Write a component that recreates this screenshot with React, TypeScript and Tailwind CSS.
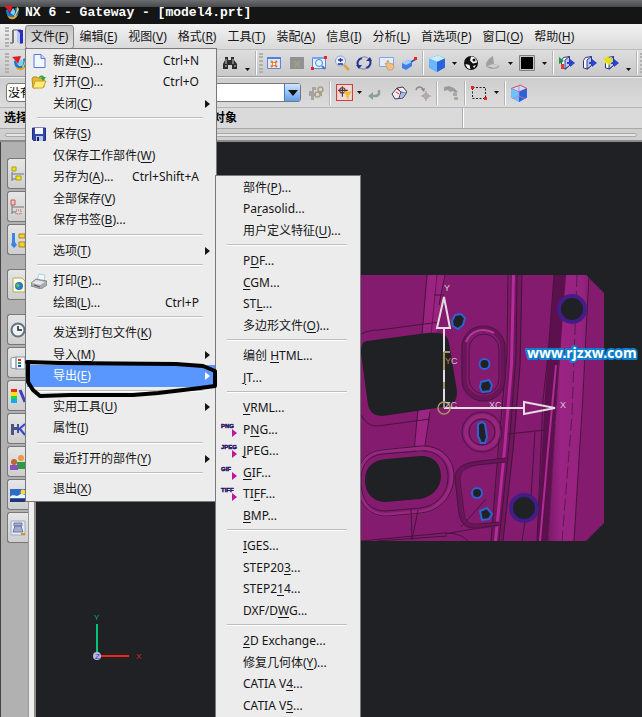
import { ReactNode } from 'react'

type Entry = {
  label: string // '&' marks the access key
  keys?: string
  sub?: boolean
  icon?: ReactNode
  active?: boolean
}

const fontClass = 'font-["Noto_Sans","Noto_Sans_CJK_SC",sans-serif]'

// ─── Icons ──────────────────────────────────────────────────────────────

function Svg({ children, size = 'w-4 h-4' }: { children: ReactNode; size?: string }) {
  return <svg viewBox="0 0 16 16" className={`${size} shrink-0`} fill="none">{children}</svg>
}

const NxLogo = (
  <Svg>
    <path d="M2 6c0 6 4 9 8 8 4-1 6-6 4-11l-3 1c1 4 0 6-2 7-3 0-4-2-5-6z" fill="#1679d6" />
    <path d="M3 11c3 3 8 3 11-1-1 4-4 6-7 5-2 0-3-2-4-4z" fill="#f5a01c" />
    <path d="M9 4c2 2 3 4 1 7-2 0-3-1-4-2z" fill="#6fd3fa" />
    <path d="M0 2l9-1-3 8-2-3z" fill="#e11b22" />
    <path d="M13 3l2 2-4 8-1-1c2-3 3-5 3-9z" fill="#ffd04a" />
  </Svg>
)

const DoorIcon = (
  <Svg>
    <path d="M1 14h3M4 1h8v13" stroke="#555" strokeWidth="1" />
    <path d="M3 1h2v13H3z" fill="#777" />
    <path d="M8 1h6v13l-2 1-4-3z" fill="#2b2bc0" />
    <path d="M8 1l3 3v11l-3-3z" fill="#b8c4ff" />
  </Svg>
)

const NewIcon = (
  <Svg>
    <path d="M3 1.5h7l4 4v9H3z" fill="#f3f7ff" stroke="#5b78d8" />
    <path d="M10 1.5v4h4" fill="#c9d6ff" stroke="#5b78d8" />
  </Svg>
)

const OpenIcon = (
  <Svg>
    <path d="M1 5l1-2h4l1 1h6v9L2 14z" fill="#e3b93a" stroke="#b68d1e" />
    <path d="M4 7h11l-3 7H2z" fill="#ffeb7a" stroke="#c79e25" />
    <path d="M8 4c0-3 4-3 5-1h2l-3 4-2-3h1c0-1-2-1-3 0z" fill="#2fa53a" />
  </Svg>
)

const SaveIcon = (
  <Svg>
    <path d="M1.500 2h13v12.500H2.500l-1-1z" fill="#3346b0" stroke="#202c80" />
    <path d="M4 2h8v6H4z" fill="#f4f6ff" />
    <path d="M5 10h7v5H5z" fill="#b9c5e6" />
    <path d="M6 11h2v4H6z" fill="#1c2458" />
  </Svg>
)

const PrintIcon = (
  <Svg>
    <path d="M6 7l2-6 6 1-1 6z" fill="#e8fbfd" stroke="#9cc3c8" strokeWidth=".7" />
    <path d="M0 10l5-4 11 2v4l-6 4-10-3z" fill="#a9abb0" stroke="#73767c" strokeWidth=".7" />
    <path d="M1 10l4-3 9 2-5 3z" fill="#e5e6e8" />
    <path d="M3 12l6 2" stroke="#54575c" />
  </Svg>
)

const FindIcon = (
  <Svg>
    <path d="M3 2h3v3h3V2h3v3l3 4v5h-5v-4H6v4H1V9l2-4z" fill="#2d2d2d" />
    <path d="M4 4v5M11 4v5M3 11h2M12 11h2" stroke="#c8c8c8" />
  </Svg>
)

const FitIcon = (
  <Svg>
    <path d="M1.500 2.500h13v11h-13z" fill="#dbe8ff" stroke="#5c87dc" />
    <path d="M1 2h14v2H1z" fill="#4f82e4" />
    <path d="M5 6l6 6M11 6l-6 6" stroke="#ed7418" strokeWidth="2" />
    <path d="M7 8h2v2H7z" fill="#fff" />
  </Svg>
)

const FitGreyIcon = (
  <Svg>
    <path d="M1 2h14v12H1z" fill="#8f9194" />
    <path d="M5 6l6 6M11 6l-6 6" stroke="#a39d83" strokeWidth="2" />
  </Svg>
)

const ZoomBoxIcon = (
  <Svg>
    <path d="M1.500 2.500h13v11h-13z" fill="#e6f0ff" stroke="#5c87dc" />
    <path d="M1 2h13v2H1z" fill="#7aa4f0" />
    <circle cx="8" cy="8" r="3.500" fill="#d8f2ff" stroke="#5288b8" />
    <path d="M11 11l3 3" stroke="#4878c4" strokeWidth="2" />
    <path d="M0 12h3v3H0zM13 1h3v3h-3z" fill="#e22" />
  </Svg>
)

const ZoomIcon = (
  <Svg>
    <path d="M10 10l5 5" stroke="#d9a441" strokeWidth="2.500" />
    <circle cx="6.500" cy="6" r="5" fill="#e4efff" stroke="#8ea4cf" />
    <path d="M4 5h5M6.500 3v4M4 9h5" stroke="#26318c" strokeWidth="1.300" />
  </Svg>
)

const RotateIcon = (
  <Svg>
    <path d="M3 12C0 8 2 4 6 3" stroke="#25368c" strokeWidth="2" />
    <path d="M13 4c3 4 1 8-3 9" stroke="#25368c" strokeWidth="2" />
    <path d="M5 3c3-2 6-1 8 1M11 13c-3 2-6 1-8-1" stroke="#6578b8" />
    <path d="M0 10h6l-3 4zM10 6h6l-2-4z" fill="#25368c" />
  </Svg>
)

const PanIcon = (
  <Svg>
    <path d="M.5 2.500h14v9H.5z" fill="#e2ecff" stroke="#84a5e0" />
    <path d="M6 8l2 1V6l1-1 1 3 4 1 1 3-2 3H9z" fill="#f0c083" stroke="#c0915a" strokeWidth=".7" />
  </Svg>
)

const PerspectiveIcon = (
  <Svg>
    <path d="M1 8l6-3 4 2v4l-6 4-4-2z" fill="#3e7ee6" />
    <path d="M1 8l6-3 4 2-6 3z" fill="#a5d1ff" />
    <path d="M10 7l5-3" stroke="#2a51b8" strokeWidth="1.500" />
    <path d="M13 2h3v3h-3z" fill="#e22" />
  </Svg>
)

const CubeIcon = (
  <Svg size="w-[18px] h-[18px]">
    <path d="M1 4l8-3 6 3v8l-7 4-7-4z" fill="#4393f4" />
    <path d="M1 4l8-3 6 3-7 3z" fill="#c5ecff" />
    <path d="M8 7l7-3v8l-7 4z" fill="#2b62dc" />
    <path d="M1 4l7 3v9l-7-4z" fill="#6ab6ff" />
  </Svg>
)

const CubeEdgeIcon = (
  <Svg size="w-[18px] h-[18px]">
    <path d="M1 4l8-3 6 3v8l-7 4-7-4z" fill="#4393f4" />
    <path d="M1 4l8-3 6 3-7 3z" fill="#bfe0ff" stroke="#e0405a" strokeWidth=".8" />
    <path d="M8 7l7-3v8l-7 4z" fill="#2b62dc" />
    <path d="M1 4l7 3v9l-7-4z" fill="#6cc4ff" />
    <path d="M8 2v9l6 2M8 11l-6 2" stroke="#d26ab5" strokeWidth=".7" />
  </Svg>
)

const SphereIcon = (
  <Svg>
    <circle cx="8" cy="8" r="7" fill="#111" />
    <path d="M8 1.500c4 0 6 3 6 6l-4 1-3-3zM2.500 9l4 1 1 4C5 14 3 12 2.500 9z" fill="#f4f4f4" />
    <circle cx="11" cy="5" r="1.500" fill="#111" />
    <path d="M10 11l3-1-2 3z" fill="#f4f4f4" />
  </Svg>
)

const GreyShapeIcon = (
  <Svg>
    <path d="M1 11c0-5 3-8 7-10l1 8 6 2c-3 4-11 4-14 0z" fill="#a0a0a0" />
    <path d="M2 11l6-2 6 2-5 2z" fill="#cfcfcf" />
  </Svg>
)

const BlackSquareIcon = (
  <Svg>
    <path d="M.5.5h15v15H.5z" fill="#c8c8c8" stroke="#808080" />
    <path d="M2 2h12v12H2z" fill="#000" />
  </Svg>
)

function LayerIcon({ mark }: { mark?: 'red' | 'star' }) {
  return (
    <Svg>
      <path d="M2.500 5.500l2-3 6-1v9l-4 3.500-4-1z" fill="#fff" stroke="#2c3584" />
      <path d="M6 5l4.500-3.500v9L6 14z" fill="#b9c9f4" stroke="#2c3584" />
      <path d="M8 7h3V4l5 4-5 4V9H8z" fill="#2a42cc" />
      {mark === 'red' && <path d="M0 2l5 4-5 3z" fill="#18983a" />}
      {mark === 'red' && <path d="M2 9h3v5H2z" fill="#e23a3a" />}
      {mark === 'star' && <path d="M5 0l1 3 3-1-1 3 2 2-3 1-1 3-2-3-3 1 1-3-2-3 3 0z" fill="#e6df1b" />}
    </Svg>
  )
}

const KeyGreyIcon = (
  <Svg>
    <path d="M1 6h3V2h4v3H6v3h2v3H6v4H3v-4H1z" fill="#a3a3a3" />
    <circle cx="12.500" cy="4.500" r="2.500" stroke="#a9a084" strokeWidth="1.500" />
    <circle cx="9.500" cy="9.500" r="2.500" stroke="#a9a084" strokeWidth="1.500" />
    <path d="M13 7v4" stroke="#a9a084" strokeWidth="2" />
  </Svg>
)

const SnapIcon = (
  <Svg size="w-[17px] h-[17px]">
    <path d="M.5.500h15v15H.5z" fill="#eadada" stroke="#d43b3b" />
    <path d="M6 2v10M2 6h9" stroke="#333" />
    <circle cx="6" cy="6" r="2.500" stroke="#7a3030" />
    <path d="M7 7h8l-3 4v4l-2-2v-2z" fill="#f4ba27" />
  </Svg>
)

const BackIcon = (
  <Svg>
    <path d="M13 5v3c0 2-2 3-4 3H6" stroke="#8ea09b" strokeWidth="2.500" />
    <path d="M7 7v8l-5-4z" fill="#8ea09b" />
  </Svg>
)

const FaceIcon = (
  <Svg>
    <path d="M1 9l5-6 6-1 4 5-4 6-8 1z" fill="#eceef4" stroke="#3a3e55" />
    <path d="M6 3l4 4-2 6M10 7l5 1" stroke="#3a3e55" />
    <path d="M6 4l4 3M5 7l3 2" stroke="#e22a2a" />
    <path d="M10 8l5-1-3 5-3 1z" fill="#a6b8ec" />
  </Svg>
)

const UndoSnapIcon = (
  <Svg>
    <path d="M1 5c1-4 6-4 7 0" stroke="#8a8a8a" strokeWidth="1.500" />
    <path d="M6 4l3 3 1-4z" fill="#8a8a8a" />
    <path d="M11 6v10M6 11h10" stroke="#a89494" />
    <circle cx="11" cy="11" r="2.500" stroke="#a89494" />
  </Svg>
)

const HammerIcon = (
  <Svg>
    <path d="M1 2l5-1 5 2 4 4-3 1-2-2-3 1-2-2-4 1z" fill="#9c9c9c" />
    <path d="M10 8h4v3h-4zM11 12h4v3h-4z" fill="#a9a99c" />
  </Svg>
)

const RectSelectIcon = (
  <Svg>
    <path d="M1.500 2.500h13v11h-13z" stroke="#222" strokeDasharray="2 1.500" />
    <path d="M0 1h3v3H0zM13 12h3v3h-3z" fill="#e22" />
  </Svg>
)

function FormatIcon({ name }: { name: string }) {
  return (
    <svg viewBox="0 0 18 18" className="w-[18px] h-[18px] overflow-visible">
      <text x="0" y="7" fontSize="6" fontWeight="bold" fill="#2d1768" stroke="#2d1768" strokeWidth=".5" fontFamily="Liberation Sans">{name}</text>
      <path d="M11 8l5 4-5 4z" fill="#c21497" />
    </svg>
  )
}

// ─── Menu data ──────────────────────────────────────────────────────────

const menuBar = ['编辑(&E)', '视图(&V)', '格式(&R)', '工具(&T)', '装配(&A)', '信息(&I)', '分析(&L)', '首选项(&P)', '窗口(&O)', '帮助(&H)']

const fileMenu: Entry[][] = [
  [
    { label: '新建(&N)...', keys: 'Ctrl+N', icon: NewIcon },
    { label: '打开(&O)...', keys: 'Ctrl+O', icon: OpenIcon },
    { label: '关闭(&C)', sub: true },
  ],
  [
    { label: '保存(&S)', icon: SaveIcon },
    { label: '仅保存工作部件(&W)' },
    { label: '另存为(&A)...', keys: 'Ctrl+Shift+A' },
    { label: '全部保存(&V)' },
    { label: '保存书签(&B)...' },
  ],
  [{ label: '选项(&T)', sub: true }],
  [
    { label: '打印(&P)...', icon: PrintIcon },
    { label: '绘图(&L)...', keys: 'Ctrl+P' },
  ],
  [
    { label: '发送到打包文件(&K)' },
    { label: '导入(&M)', sub: true },
    { label: '导出(&E)', sub: true, active: true },
  ],
  [
    { label: '实用工具(&U)', sub: true },
    { label: '属性(&I)' },
  ],
  [{ label: '最近打开的部件(&Y)', sub: true }],
  [{ label: '退出(&X)' }],
]

const exportMenu: Entry[][] = [
  [{ label: '部件(&P)...' }, { label: 'Pa&rasolid...' }, { label: '用户定义特征(&U)...' }],
  [{ label: 'P&DF...' }, { label: '&CGM...' }, { label: 'ST&L...' }, { label: '多边形文件(&O)...' }],
  [{ label: '编创 &HTML...' }, { label: '&JT...' }],
  [
    { label: '&VRML...' },
    { label: 'P&NG...', icon: <FormatIcon name="PNG" /> },
    { label: '&JPEG...', icon: <FormatIcon name="JPEG" /> },
    { label: '&GIF...', icon: <FormatIcon name="GIF" /> },
    { label: 'TI&FF...', icon: <FormatIcon name="TIFF" /> },
    { label: '&BMP...' },
  ],
  [{ label: '&IGES...' }, { label: 'STEP20&3...' }, { label: 'STEP2&14...' }, { label: 'DXF/D&WG...' }],
  [{ label: '&2D Exchange...' }, { label: '修复几何体(&Y)...' }, { label: 'CATIA V&4...' }, { label: 'CATIA V&5...' }],
]

function KeyLabel({ text }: { text: string }) {
  const at = text.indexOf('&')
  if (at < 0) return <>{text}</>
  return <>{text.slice(0, at)}<u className="underline-offset-2">{text[at + 1]}</u>{text.slice(at + 2)}</>
}

function Menu({ groups, className, label }: { groups: Entry[][]; className: string; label: string }) {
  let row = 0
  return (
    <div role="menu" aria-label={label} className={`absolute border border-[#77797c] bg-[#ececec] p-px ${className}`}>
      {groups.map((group, g) => (
        <div key={g} role="group">
          {g > 0 && <div role="separator" className="h-[9px] pt-[3px] pl-[10px] pr-3"><div className="h-[2px] border-t border-[#bdbdbd] bg-white" /></div>}
          {group.map(entry => (
            <button
              key={entry.label}
              role="menuitem"
              className={`flex w-full items-center text-left whitespace-nowrap ${row++ % 2 ? 'h-[22px]' : 'h-[21px]'} ${
                entry.active ? 'bg-[#5996fd] text-white' : 'text-[#161616]'
              }`}
            >
              <span className="flex w-[26px] shrink-0 items-center pl-1">{entry.icon}</span>
              <span className="flex-1"><KeyLabel text={entry.label} /></span>
              {entry.keys && <span className="pr-4">{entry.keys}</span>}
              {entry.sub && <svg viewBox="0 0 5 8" className="mr-[5px] h-2 w-[5px]"><path d="M0 0l5 4-5 4z" fill="currentColor" /></svg>}
            </button>
          ))}
        </div>
      ))}
    </div>
  )
}

// ─── Toolbars ───────────────────────────────────────────────────────────

function Tool({ children, name }: { children: ReactNode; name: string }) {
  return <button aria-label={name} className="flex h-6 w-[22px] shrink-0 items-center justify-center">{children}</button>
}

function Caret({ low, tight }: { low?: boolean; tight?: boolean }) {
  return (
    <button aria-label="更多" className={`flex h-6 shrink-0 justify-center ${tight ? 'w-2' : 'w-3'} ${low ? 'items-end pb-1' : 'items-center'}`}>
      <svg viewBox="0 0 5 3" className="h-[3px] w-[5px]"><path d="M0 0h5L2.500 3z" fill="#111" /></svg>
    </button>
  )
}

function Divider() {
  return <div className="mx-[2px] h-6 w-[2px] shrink-0 border-l border-[#b4b4b4] bg-white" />
}

function Grip() {
  return <div className="h-5 w-1 shrink-0 border-x-2 border-dotted border-x-[#b0b0b0]" />
}

function ViewToolbar() {
  return (
    <div className="flex h-[27px] items-center overflow-hidden border-b border-[#9a9a9a] bg-linear-to-b from-[#dedede] to-[#c9c9c9] pl-[5px]">
      <Grip />
      <Tool name="开始">{NxLogo}</Tool>
      <div className="w-[188px] shrink-0" />
      <Tool name="查找">{FindIcon}</Tool>
      <Caret low />
      <Divider />
      <Grip />
      <div className="flex w-[157px] shrink-0 justify-between">
        <Tool name="适合窗口">{FitIcon}</Tool>
        <Tool name="适合选择">{FitGreyIcon}</Tool>
        <Tool name="窗口缩放">{ZoomBoxIcon}</Tool>
        <Tool name="缩放">{ZoomIcon}</Tool>
        <Tool name="旋转">{RotateIcon}</Tool>
        <Tool name="平移">{PanIcon}</Tool>
        <Tool name="透视">{PerspectiveIcon}</Tool>
      </div>
      <Divider />
      <Tool name="着色">{CubeIcon}</Tool>
      <Caret />
      <Tool name="渲染">{SphereIcon}</Tool>
      <Tool name="剖切">{GreyShapeIcon}</Tool>
      <Caret />
      <Tool name="背景">{BlackSquareIcon}</Tool>
      <Caret />
      <Divider />
      <Tool name="图层设置"><LayerIcon mark="red" /></Tool>
      <Tool name="移动图层"><LayerIcon /></Tool>
      <Tool name="新图层"><LayerIcon mark="star" /></Tool>
      <Caret low />
      <Divider />
      <Grip />
    </div>
  )
}

function SelectionToolbar() {
  return (
    <div className="flex h-[30px] items-center overflow-hidden border-t border-white/60 bg-linear-to-b from-[#cdcdcd] to-[#dcdcdc] pl-[6px]">
      <div className="relative w-[295px] shrink-0">
        <select aria-label="过滤器" className="block h-[19px] w-full appearance-none rounded-[3px] border border-[#777] bg-white px-px text-xs leading-none text-black">
          <option>没有</option>
        </select>
        <span className="pointer-events-none absolute top-px right-px flex h-[17px] w-4 items-center justify-center border-l border-[#4b79b5] bg-linear-to-b from-[#cfe5ff] to-[#5f9fe8]">
          <svg viewBox="0 0 10 6" className="h-[6px] w-[10px]"><path d="M0 0h10L5 6z" fill="#111" /></svg>
        </span>
      </div>
      <div className="w-1 shrink-0" />
      <Tool name="约束">{KeyGreyIcon}</Tool>
      <Divider />
      <Tool name="捕捉点">{SnapIcon}</Tool>
      <Caret tight />
      <div className="flex w-[71px] shrink-0 justify-between">
        <Tool name="返回">{BackIcon}</Tool>
        <Tool name="面">{FaceIcon}</Tool>
        <Tool name="撤消捕捉">{UndoSnapIcon}</Tool>
      </div>
      <Divider />
      <Tool name="工具">{HammerIcon}</Tool>
      <Divider />
      <Tool name="矩形选择">{RectSelectIcon}</Tool>
      <Caret />
      <Divider />
      <Tool name="实体">{CubeEdgeIcon}</Tool>
    </div>
  )
}

// ─── Resource bar ───────────────────────────────────────────────────────

const resourceTabs: { name: string; gap?: boolean; icon: ReactNode }[] = [
  { name: '装配导航器', icon: <Svg><path d="M2 1h4v4H2zM6 10h5v4H6z" fill="#f2e61e" stroke="#a9a00c" /><path d="M2 6v9M2 8h12M2 13h4" stroke="#6670a0" /></Svg> },
  { name: '约束导航器', icon: <Svg><path d="M1 1h4v5H1z" fill="#f1c4c4" stroke="#c25a5a" /><path d="M2 6v9M2 8h12M2 13h4" stroke="#777" /><path d="M6 11h5v4H6z" stroke="#c25a5a" strokeDasharray="1 1" /></Svg> },
  { name: '部件导航器', icon: <Svg><path d="M2 1h3v9l2 3-3 3-3-3 1-3z" fill="#3e84e6" /><path d="M9 2h6v4H9zM9 10h6v5H9z" fill="#f4cf3a" stroke="#a8851a" /></Svg> },
  { name: '浏览器', gap: true, icon: <Svg><path d="M3 1h9l3 3v11H3z" fill="#fffce0" stroke="#b6a75c" /><circle cx="9" cy="9" r="4" fill="#2979c9" /><path d="M7 6l3 2-2 3-2-2z" fill="#5bc356" /></Svg> },
  { name: '历史', gap: true, icon: <Svg><circle cx="8" cy="8" r="6.500" fill="#eef4f8" stroke="#61717e" strokeWidth="2" /><path d="M8 4v4h4" stroke="#222" strokeWidth="1.500" /></Svg> },
  { name: '材料', icon: <Svg><path d="M1 3l5-1v12l-5-1zM6 2h9v12H6z" fill="#f7faff" stroke="#8998a8" /><path d="M8 4h3v2H8z" fill="#e22" /><path d="M8 7h3v2H8z" fill="#25a52c" /><path d="M8 10h3v2H8z" fill="#2545e0" /></Svg> },
  { name: '颜色', icon: <Svg><path d="M1 1h6v4H1z" fill="#f32a13" /><path d="M1 4h6v4H1z" fill="#f5e112" /><path d="M1 8h6v3H1z" fill="#22d836" /><path d="M1 11h6v4H1z" fill="#16a9ef" /><path d="M10 2l5 12" stroke="#4040bd" strokeWidth="3" /></Svg> },
  { name: '加工', icon: <Svg><path d="M1 3h3v3h3V3h2v9H7V9H4v5H1z" fill="#465486" /><path d="M8 9l7-6M10 8l5 6" stroke="#3543d0" strokeWidth="2" /></Svg> },
  { name: '角色', icon: <Svg><circle cx="11" cy="4" r="3" fill="#f09a35" /><path d="M7 8h9v7H7z" fill="#2f9a40" /><circle cx="4" cy="8" r="3" fill="#bc6634" /><path d="M0 11h8v5H0z" fill="#8750bd" /></Svg> },
  { name: '场景', icon: <Svg><path d="M0 2h16v12H0z" fill="#2e6cc8" /><circle cx="13" cy="5" r="2.500" fill="#fddb3d" /><path d="M0 10c4-4 6 1 9-2 3-2 4 0 7 0v3H0z" fill="#eaf4ff" /><path d="M0 12h16v3H0z" fill="#24366e" /></Svg> },
  { name: '打印', icon: <Svg><path d="M1 1h14v14H1z" fill="#e4ecf8" stroke="#9cabc4" /><path d="M4 3h8v3H4zM5 6h6l2 6H3z" fill="#a5adca" stroke="#717baa" /><path d="M11 13h4v2h-4z" fill="#ed8b1a" /></Svg> },
]

function ResourceBar() {
  return (
    <nav aria-label="资源条" className="flex w-7 shrink-0 flex-col gap-[2px] border-l border-[#444] bg-[#b1b1b1] pt-4 pl-[6px]">
      {resourceTabs.map(tab => (
        <button
          key={tab.name}
          aria-label={tab.name}
          className={`flex h-[31px] shrink-0 items-center overflow-hidden rounded-l-[3px] border border-r-0 border-[#777] bg-linear-to-b from-[#e6e6e6] to-[#cecece] pl-[2px] ${tab.gap ? 'mt-3' : ''}`}
        >
          {tab.icon}
        </button>
      ))}
    </nav>
  )
}

// ─── Graphics window ────────────────────────────────────────────────────

function ModelView() {
  return (
    <svg viewBox="36 142 606 575" preserveAspectRatio="xMinYMin meet" className="h-full w-full" fill="none">
      <defs>
        <clipPath id="plate"><path d="M361 275h225l18 18v230l-18 18H361z" /></clipPath>
        <linearGradient id="band" x1="0" x2="1"><stop offset="0" stopColor="#7b1868" /><stop offset=".3" stopColor="#9a2383" /><stop offset=".8" stopColor="#98227f" /><stop offset="1" stopColor="#83206e" /></linearGradient>
      </defs>
      <g clipPath="url(#plate)">
        <path d="M340 270h270v280H340z" fill="#841b6f" />
        {/* left rib */}
        <path d="M427 275h18l-9 62h-14z" fill="#99237f" />
        <path d="M437 275l-6 60" stroke="#6b145a" />
        <path d="M427 275l-5 60M445 275l-6 30M434 295h10M361 334c6-3 12-4 18-4l61-8" stroke="#46153e" />
        <path d="M419 408h11l-5 44h-12z" fill="#9c2584" />
        <path d="M418 408l-4 44M430 412l-6 40M361 415c5 9 10 11 17 11l52-7" stroke="#46153e" />
        {/* centre rib */}
        <path d="M510 275h12l-1 80-6 80-12 106h-12l10-106 8-80z" fill="#73155f" />
        <path d="M512 275h3l-2 90-7 85-9 91h-3l9-91 7-85z" fill="#b32c99" />
        <path d="M508 275l-1 80-8 85-8 101M517 275l-1 80-6 80-11 106M522 275l-2 90-7 85-10 91" stroke="#3f1738" />
        {/* right channel */}
        <path d="M554 275h14l-9 120-9 146h-13l8-146z" fill="#5d104e" />
        <path d="M556 365l-8 85-8 91" stroke="#b22b98" strokeWidth="2" />
        <path d="M566 275h24l-5 100-11 166h-26l9-146z" fill="url(#band)" />
        <path d="M554 275l-6 80-5 45-6 141M589 275l-6 120-9 146" stroke="#44163c" />
        <path d="M577 275l-5 140-10 126M560 345l-12 196" stroke="#53204a" strokeDasharray="12 4" />
        <path d="M486 499l-25 28M508 434l37-4M535 432l-4 65M526 515l-4 26" stroke="#46153e" />
        {/* big openings */}
        <path d="M367 341l60-8c14-1 20 0 22 10l8 48c0 10-3 14-14 16l-60 9c-8 0-13-3-15-11l-7-52c0-7 1-11 6-12z" fill="#1f2124" />
        <path d="M382 451l38-3c18-1 32 11 32 28s-12 33-31 36l-34 3c-18 1-28-13-28-34 0-18 8-28 23-30z" stroke="#97277f" strokeWidth="4" />
        <path d="M381 450l40-4c19-1 33 12 33 30s-13 35-33 37l-33 3c-20 1-31-14-31-35 0-18 9-29 24-31zM383 454l37-3c17-1 28 10 28 26s-11 29-28 31l-34 3c-16 0-25-10-25-30 0-17 7-25 22-27z" stroke="#48163f" />
        <path d="M386 459l34-3c14-1 21 9 21 20 0 12-9 21-21 23l-34 3c-14 0-21-10-21-22s7-20 21-21z" fill="#1f2124" />
        <path d="M411 508l1 32M418 510l-6 30M361 541l84-8c12 0 18 3 23 8M377 541l70-5M445 534l45-8" stroke="#46153e" />
        {/* pocket, upper */}
        <rect x="464" y="329" width="39" height="69" rx="19" stroke="#6a145a" strokeWidth="5" />
        <rect x="462" y="326" width="43" height="75" rx="21" stroke="#48163f" />
        <rect x="469" y="334" width="30" height="60" rx="15" stroke="#48163f" />
        <path d="M466 342c5-12 17-15 28-9" stroke="#b43a9c" strokeWidth="2" />
        {/* pocket, round */}
        <circle cx="482" cy="432" r="20" stroke="#48163f" />
        <circle cx="482" cy="432" r="16" stroke="#96277f" strokeWidth="4" />
        <circle cx="482" cy="432" r="13" stroke="#48163f" />
        {/* pocket, lower */}
        <path d="M506 460l-30 3c-13 2-19 7-19 17l4 34c2 10 8 14 18 13l20-3" stroke="#6a145a" strokeWidth="4" />
        <path d="M506 458l-32 4c-13 2-19 7-19 17l4 35c2 11 9 15 20 14l20-3M506 462l-29 3c-12 2-18 7-17 16l4 32c1 9 6 12 15 11l20-2" stroke="#48163f" />
        <path d="M455 315l6-1 4 4-2 7-5 4-5-3-1-5z" fill="#1f2124" stroke="#2d63d2" strokeWidth="2" />
        <circle cx="484.500" cy="364" r="5" fill="#1f2124" stroke="#2d63d2" strokeWidth="2" />
        <path d="M481 382l8-2 3 5-2 6-8 1-2-5z" fill="#1f2124" stroke="#2d63d2" strokeWidth="2" />
        <path d="M478 424l4-2 3 2 2 13-2 6h-4l-3-7z" fill="#1f2124" stroke="#2d63d2" strokeWidth="2" />
        <circle cx="477" cy="493" r="5" fill="#1f2124" stroke="#2d63d2" strokeWidth="2" />
        <path d="M480 511l7-3 5 6-3 5-7 1z" fill="#1f2124" stroke="#2d63d2" strokeWidth="2" />
        <circle cx="572" cy="309" r="13" fill="#1f2124" stroke="#431c88" strokeWidth="4" />
        <circle cx="524" cy="508" r="13" fill="#1f2124" stroke="#431c88" strokeWidth="4" />
      </g>

      {/* work coordinate system */}
      <path d="M444 328v24M444 408h80" stroke="#e4dce2" strokeWidth="2" />
      <path d="M444 352v56M444 352h6" stroke="#a39863" strokeWidth="2" />
      <path d="M444 370v34" stroke="#e4dce2" strokeWidth="2" strokeDasharray="12 7" />
      <path d="M444 297l6 31h-13zM524 402v12l31-6z" stroke="#e4dce2" strokeWidth="2" />
      <circle cx="444" cy="408" r="6" stroke="#a39863" strokeWidth="1.500" />
      <g fontFamily="Liberation Sans" fontSize="9" fill="#d9c9d5">
        <text x="444" y="291">Y</text>
        <text x="445" y="364"><tspan fill="#d07a38">Y</tspan>C</text>
        <text x="445" y="408">ZC</text>
        <text x="489" y="408">XC</text>
        <text x="560" y="408">X</text>
      </g>

      {/* view triad */}
      <path d="M97 624v30" stroke="#06c27c" strokeWidth="2" />
      <path d="M99 656h30" stroke="#f32222" strokeWidth="2" />
      <circle cx="97" cy="656" r="4" fill="#b9bbd2" />
      <g fontFamily="Liberation Sans" fontSize="8">
        <text x="94" y="620" fill="#06a86c">Y</text>
        <text x="136" y="659" fill="#d82a2a">X</text>
        <text x="95" y="659" fill="#2b2be0">Z</text>
      </g>
      <text x="527" y="358" fontFamily="Noto Sans" fontSize="14" fontWeight="bold" fill="#fff" stroke="#0b80d0" strokeWidth="4" strokeLinejoin="round" paintOrder="stroke">www.rjzxw.com</text>
    </svg>
  )
}

export default function App() {
  return (
    <div className={`relative flex h-screen flex-col overflow-hidden bg-[#d6d6d6] text-xs leading-4 ${fontClass}`}>
      <header className="flex h-6 shrink-0 items-center gap-[5px] bg-linear-to-b from-[#6d6e72] from-0% via-[#47484b] via-30% to-[#151515] to-31% pl-1">
        {NxLogo}
        <h1 className='font-["Liberation_Mono",monospace] text-[13px] leading-none font-bold text-white'>NX 6 - Gateway - [model4.prt]</h1>
      </header>

      <div role="menubar" className="relative z-10 flex h-[26px] shrink-0 items-center border-b border-[#bcbcbc] bg-linear-to-b from-[#f2f2f2] to-[#d9d9d9] pl-[5px] text-[#161616]">
        <Grip />
        <span className="flex w-4 shrink-0 justify-center overflow-hidden">{DoorIcon}</span>
        <div>
          <button role="menuitem" className="h-6 rounded-[3px] border border-[#858585] bg-linear-to-b from-[#c4c4c4] to-[#dedede] px-[5px] whitespace-nowrap"><KeyLabel text="文件(&F)" /></button>
          <Menu groups={fileMenu} label="文件" className="top-6 left-[25px] w-[192px]" />
          <Menu groups={exportMenu} label="导出" className="top-[151px] left-[215px] w-[146px] pb-2" />
          {/* pen mark around the export entry */}
          <svg viewBox="0 0 194 42" className="pointer-events-none absolute top-[334px] left-6 h-[42px] w-[194px]" fill="none">
            <path d="M3 4L36 5 152 6 179 8 191 13V28L176 30 134 35 109 37 46 37 16 38 9 32 4 24V5" stroke="#000" strokeWidth="4" strokeLinejoin="round" strokeLinecap="round" />
          </svg>
        </div>
        <div className="flex gap-px">
          {menuBar.map(item => (
            <button key={item} role="menuitem" className="h-6 shrink-0 px-[5px] whitespace-nowrap"><KeyLabel text={item} /></button>
          ))}
        </div>
      </div>

      <div className="shrink-0">
        <ViewToolbar />
        <SelectionToolbar />
        <div className="flex h-[21px] items-center border-t border-[#b4b4b4] bg-[#dadada] pl-1 font-bold text-black">
          <span className="w-[209px] shrink-0">选择</span>
          <span className="w-[249px] shrink-0">对象</span>
          <div className="h-full w-[2px] border-l border-[#aaa] bg-white" />
        </div>
        <div className="flex h-[14px] items-center border-t border-b-2 border-t-[#a8a8a8] border-b-[#8c8c8c] bg-[#cfcfcf] px-[5px]">
          <div className="h-1 flex-1 rounded-sm border border-[#a9a9a9] bg-[#e5e5e5]" />
        </div>
      </div>

      <main className="flex min-h-0 flex-1">
        <ResourceBar />
        <div className="w-2 shrink-0 border-r-2 border-l border-r-[#8e8e86] border-l-[#999] bg-[#efefef]" />
        <div className="min-w-0 flex-1 bg-[#1f2124]"><ModelView /></div>
      </main>
    </div>
  )
}
